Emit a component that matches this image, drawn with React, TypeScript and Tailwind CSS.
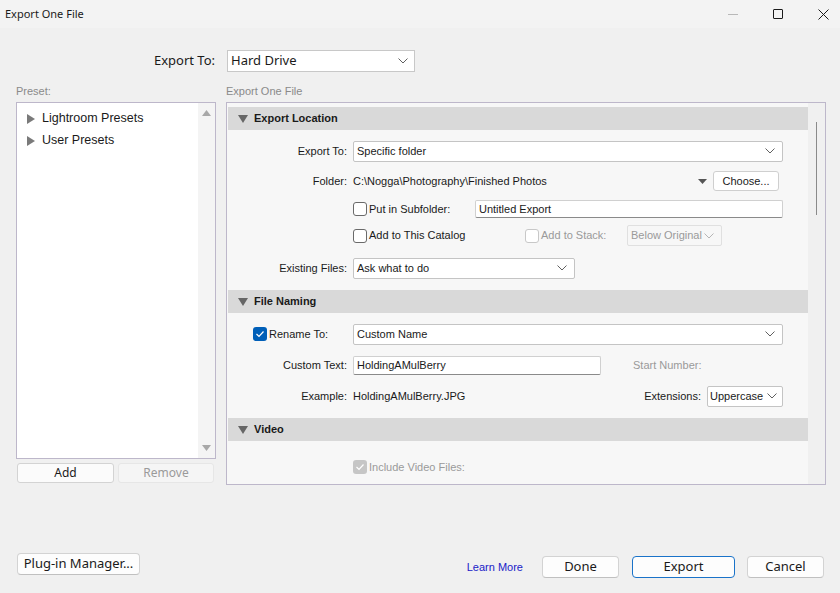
import React from 'react'

const sys = "font-['Segoe_UI','Noto_Sans',sans-serif]"
const lr = "font-['Liberation_Sans',Arial,sans-serif]"

function Chevron({ color = '#606060' }: { color?: string }) {
  return (
    <svg width="10" height="6" viewBox="0 0 10 6" className="shrink-0">
      <path d="M0.5 0.5 L5 5 L9.5 0.5" fill="none" stroke={color} strokeWidth="1" />
    </svg>
  )
}

function DownTri({ color = '#666' }: { color?: string }) {
  return (
    <svg width="10" height="8" viewBox="0 0 10 8" className="shrink-0">
      <path d="M0 0 H10 L5 8 Z" fill={color} />
    </svg>
  )
}

function RightTri() {
  return (
    <svg width="8" height="10" viewBox="0 0 8 10" className="shrink-0">
      <path d="M0 0 L8 5 L0 10 Z" fill="#7a7a7a" />
    </svg>
  )
}

function Check({ checked = false, disabled = false }: { checked?: boolean; disabled?: boolean }) {
  if (checked) {
    return (
      <div
        className={`w-[14px] h-[14px] rounded-[3px] flex items-center justify-center shrink-0 ${
          disabled ? 'bg-[#c6c6c6]' : 'bg-[#005fb8]'
        }`}
      >
        <svg width="10" height="8" viewBox="0 0 10 8">
          <path d="M1.5 4 L4 6.5 L8.5 1.5" fill="none" stroke="white" strokeWidth="1.2" />
        </svg>
      </div>
    )
  }
  return (
    <div
      className={`w-[14px] h-[14px] rounded-[3px] border bg-white shrink-0 ${
        disabled ? 'border-[#c8c8c8]' : 'border-[#6a6a6a]'
      }`}
    />
  )
}

function Select({
  value,
  className = '',
  disabled = false
}: {
  value: string
  className?: string
  disabled?: boolean
}) {
  return (
    <div
      className={`flex items-center justify-between border rounded-[2px] pl-[3px] pr-[7px] ${
        disabled ? 'border-[#e0e0e0] bg-[#f7f7f7] text-[#9a9a9a]' : 'border-[#c4c4c4] bg-white text-[#1a1a1a]'
      } ${className}`}
    >
      <span>{value}</span>
      <Chevron color={disabled ? '#b5b5b5' : '#606060'} />
    </div>
  )
}

function Input({ value, className = '' }: { value: string; className?: string }) {
  return (
    <div
      className={`flex items-center bg-white border border-[#d0d0d0] border-b-[#8a8a8a] rounded-[2px] pl-[3px] text-[#1a1a1a] ${className}`}
    >
      {value}
    </div>
  )
}

function SectionHeader({ title }: { title: string }) {
  return (
    <div className="h-[23px] bg-[#d9d9d9] flex items-center pl-[10px] gap-[6px]">
      <DownTri />
      <span className="font-bold text-[#1a1a1a]">{title}</span>
    </div>
  )
}

function Label({ children }: { children: React.ReactNode }) {
  return <div className="w-[125px] text-right shrink-0 pr-[6px] text-[#1a1a1a]">{children}</div>
}

function WinButton({
  children,
  className = '',
  primary = false
}: {
  children: React.ReactNode
  className?: string
  primary?: boolean
}) {
  return (
    <div
      className={`h-[22px] flex items-center justify-center bg-[#fdfdfd] rounded-[4px] border text-[13px] text-[#1a1a1a] ${
        primary ? 'border-[#1a73c9]' : 'border-[#d3d3d3] border-b-[#c0c0c0]'
      } ${className}`}
    >
      {children}
    </div>
  )
}

export default function App() {
  return (
    <div className={`w-[840px] h-[593px] bg-[#f0f0f0] flex flex-col overflow-hidden ${sys}`}>
      {/* title bar */}
      <div className="h-[28px] bg-[#f3f3f3] flex items-center justify-between shrink-0">
        <span className="pl-[5px] text-[11px] text-[#1a1a1a]">Export One File</span>
        <div className="flex items-center h-full gap-[35px] pr-[11px]">
          <div className="w-[10px] h-[1px] bg-[#b8b8b8]" />
          <div className="w-[10px] h-[10px] border border-[#1a1a1a] rounded-[1px]" />
          <svg width="11" height="11" viewBox="0 0 11 11">
            <path d="M0.5 0.5 L10.5 10.5 M10.5 0.5 L0.5 10.5" stroke="#1a1a1a" strokeWidth="1" />
          </svg>
        </div>
      </div>

      {/* export to */}
      <div className="flex items-center mt-[22px] h-[22px]">
        <div className="w-[215px] text-right text-[13px] text-[#1a1a1a]">Export To:</div>
        <div className="ml-[12px] w-[188px] h-[22px] bg-white border border-[#c8c8c8] flex items-center justify-between pl-[3px] pr-[6px] text-[13px] text-[#1a1a1a]">
          <span>Hard Drive</span>
          <Chevron />
        </div>
      </div>

      {/* captions */}
      <div className={`flex mt-[12px] h-[14px] items-center text-[11px] text-[#8a8a8a] ${lr}`}>
        <div className="ml-[16px] w-[210px]">Preset:</div>
        <div>Export One File</div>
      </div>

      {/* main */}
      <div className={`flex mt-[4px] pl-[16px] gap-[10px] ${lr}`}>
        <div className="w-[200px] flex flex-col">
          <div className="h-[357px] bg-white border border-[#bdb7ca] flex">
            <div className="flex-1 pt-[8px] pl-[10px] text-[12.5px] text-[#1a1a1a]">
              <div className="flex items-center gap-[7px] h-[15px]">
                <RightTri />
                <span>Lightroom Presets</span>
              </div>
              <div className="flex items-center gap-[7px] h-[15px] mt-[7px]">
                <RightTri />
                <span>User Presets</span>
              </div>
            </div>
            <div className="w-[17px] bg-[#f4f4f4] flex flex-col items-center justify-between py-[7px]">
              <svg width="9" height="6" viewBox="0 0 9 6">
                <path d="M0 6 L4.5 0 L9 6 Z" fill="#a8a8a8" />
              </svg>
              <svg width="9" height="6" viewBox="0 0 9 6">
                <path d="M0 0 L4.5 6 L9 0 Z" fill="#a8a8a8" />
              </svg>
            </div>
          </div>
          <div className={`flex gap-[4px] mt-[4px] pl-[1px] text-[12px] ${sys}`}>
            <div className="w-[97px] h-[20px] bg-[#fbfbfb] border border-[#d3d3d3] rounded-[3px] flex items-center justify-center text-[#1a1a1a]">
              Add
            </div>
            <div className="w-[96px] h-[20px] bg-[#f5f5f5] border border-[#e6e6e6] rounded-[3px] flex items-center justify-center text-[#9a9a9a]">
              Remove
            </div>
          </div>
        </div>

        <div className="w-[600px] h-[383px] border border-[#bdb7ca] bg-[#f7f7f7] flex text-[11px]">
          <div className="flex-1 pl-[1px] pt-[4px]">
            <SectionHeader title="Export Location" />
            <div className="flex flex-col pb-[12px]">
              <div className="flex items-center mt-[11px] h-[20px]">
                <Label>Export To:</Label>
                <Select value="Specific folder" className="w-[430px] h-[21px]" />
              </div>
              <div className="flex items-center mt-[10px] h-[20px]">
                <Label>Folder:</Label>
                <span className="text-[#1a1a1a]">C:\Nogga\Photography\Finished Photos</span>
                <div className="flex-1" />
                <svg width="9" height="5" viewBox="0 0 9 5" className="mr-[6px]">
                  <path d="M0 0 H9 L4.5 5 Z" fill="#555" />
                </svg>
                <div className="w-[66px] h-[20px] bg-white border border-[#cfcfcf] rounded-[3px] flex items-center justify-center text-[#1a1a1a] mr-[29px]">
                  Choose...
                </div>
              </div>
              <div className="flex items-center mt-[9px] h-[18px]">
                <Label> </Label>
                <Check />
                <span className="ml-[2px] w-[106px] text-[#1a1a1a]">Put in Subfolder:</span>
                <Input value="Untitled Export" className="w-[308px] h-[18px]" />
              </div>
              <div className="flex items-center mt-[7px] h-[21px]">
                <Label> </Label>
                <Check />
                <span className="ml-[2px] w-[156px] text-[#1a1a1a]">Add to This Catalog</span>
                <Check disabled />
                <span className="ml-[2px] w-[86px] text-[#9a9a9a]">Add to Stack:</span>
                <Select value="Below Original" disabled className="w-[95px] h-[21px]" />
              </div>
              <div className="flex items-center mt-[12px] h-[20px]">
                <Label>Existing Files:</Label>
                <Select value="Ask what to do" className="w-[222px] h-[21px]" />
              </div>
            </div>

            <SectionHeader title="File Naming" />
            <div className="flex flex-col pb-[12px]">
              <div className="flex items-center mt-[11px] h-[20px]">
                <div className="w-[125px] shrink-0 pl-[25px] flex items-center gap-[2px] text-[#1a1a1a]">
                  <Check checked />
                  <span>Rename To:</span>
                </div>
                <Select value="Custom Name" className="w-[430px] h-[21px]" />
              </div>
              <div className="flex items-center mt-[12px] h-[19px]">
                <Label>Custom Text:</Label>
                <Input value="HoldingAMulBerry" className="w-[248px] h-[19px]" />
                <span className="ml-[32px] text-[#9a9a9a]">Start Number:</span>
              </div>
              <div className="flex items-center mt-[11px] h-[20px]">
                <Label>Example:</Label>
                <span className="text-[#1a1a1a]">HoldingAMulBerry.JPG</span>
                <div className="flex-1" />
                <span className="text-[#1a1a1a] mr-[6px]">Extensions:</span>
                <Select value="Uppercase" className="w-[76px] h-[21px] mr-[25px] !pl-[2px] !pr-[5px]" />
              </div>
            </div>

            <SectionHeader title="Video" />
            <div className="flex items-center mt-[16px] h-[20px]">
              <Label> </Label>
              <Check checked disabled />
              <span className="ml-[2px] text-[#9a9a9a]">Include Video Files:</span>
            </div>
          </div>
          <div className="w-[17px] bg-[#f0f0f0] flex justify-center pt-[19px]">
            <div className="w-[1px] h-[93px] bg-[#8a8a8a]" />
          </div>
        </div>
      </div>

      {/* bottom buttons */}
      <div className="flex mt-[68px] pl-[17px]">
        <WinButton className="w-[123px]">Plug-in Manager...</WinButton>
        <div className="flex-1" />
        <div className="flex items-center mt-[3px]">
          <span className={`text-[11px] text-[#2121c8] mr-[19px] ${lr}`}>Learn More</span>
          <WinButton className="w-[77px]">Done</WinButton>
          <WinButton primary className="w-[103px] ml-[13px]">Export</WinButton>
          <WinButton className="w-[77px] ml-[12px] mr-[16px]">Cancel</WinButton>
        </div>
      </div>
    </div>
  )
}
